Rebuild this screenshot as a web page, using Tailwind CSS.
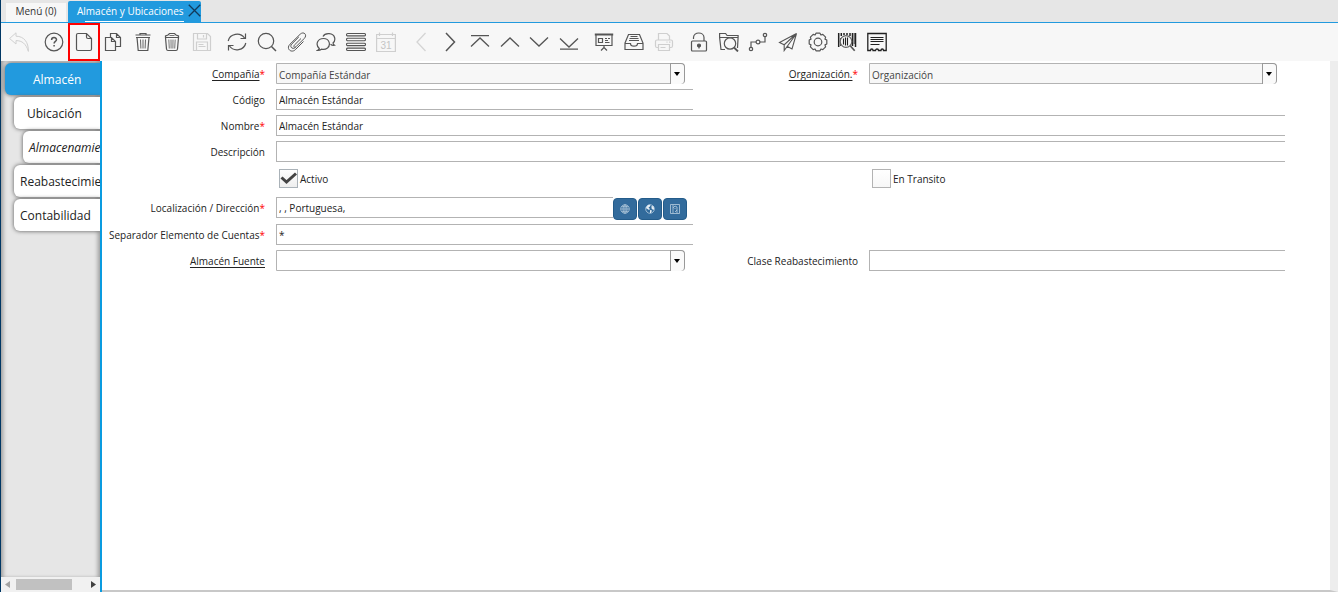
<!DOCTYPE html>
<html lang="es">
  <head>
    <meta charset="UTF-8" />
    <meta name="viewport" content="width=device-width, initial-scale=1.0">
    <title>Almacén y Ubicaciones</title>
    <script src="https://cdn.jsdelivr.net/npm/@tailwindcss/browser@4"></script>
  </head>
  <body class="h-screen flex flex-col overflow-hidden border-l border-[#003764] bg-white font-['Open_Sans','Noto_Sans',sans-serif] text-[10px] text-[#222]">

    <!-- Window tabs -->
    <header class="flex items-end h-[23px] shrink-0 pl-[5px] gap-[2px] bg-[#e6e6e6] border-b border-[#229ade]">
      <button class="h-[19px] w-[60px] pb-[2px] bg-[#f7f7f7] text-[#333]">Menú (0)</button>
      <div class="relative flex items-center h-[21px] w-[133px] pl-[9px] bg-[#229ade] rounded-t-xs">
        <button class="text-white font-medium whitespace-nowrap">Almacén y Ubicaciones</button>
        <span class="absolute left-[17px] bottom-0 w-[99px] h-px bg-white"></span>
        <button aria-label="Cerrar" class="absolute right-0 top-[3px]">
          <svg class="w-[13px] h-[13px]" viewBox="0 0 12 12" fill="none" stroke="#123a5a" stroke-width="1.2"><path d="M.7.7l10.600 10.600M11.300.7L.7 11.300" /></svg>
        </button>
      </div>
    </header>

    <!-- Toolbar -->
    <div class="flex gap-[5px] h-[38px] shrink-0 pl-[3px] bg-[#f7f7f7] text-[#555]">
      <div class="flex w-[30px]">
        <button disabled aria-label="Deshacer" class="flex-1 flex items-center justify-center text-[#d0d0d0]">
          <svg class="w-5 h-5" viewBox="0 0 20 20" fill="none" stroke="currentColor"><path d="M7 .8L.6 6.500 7 12V8.600c6 0 10 3 12.400 10.800C19.500 10 15 4.300 7 4.200z" /></svg>
        </button>
      </div>
      <div class="grid grid-cols-6 w-[178px]">
        <button aria-label="Ayuda" class="flex items-center justify-center">
          <svg class="w-5 h-5" viewBox="0 0 20 20" fill="none" stroke="currentColor" stroke-width="1.200"><circle cx="10" cy="10" r="8.800" /><path stroke-width="1.500" d="M7.600 8c0-3.200 4.900-3.100 4.900-.2 0 1.600-2.400 1.700-2.400 3.700M10.100 13v1.600" /></svg>
        </button>
        <button aria-label="Nuevo" class="w-8 flex items-center justify-center justify-self-center border-2 border-[#f00]">
          <svg class="w-5 h-5 shrink-0" viewBox="0 0 20 20" fill="none" stroke="currentColor" stroke-width="1.200"><path d="M4 1.500h8.500L17.500 6.500v10.500q0 1.500-1.500 1.500H4q-1.500 0-1.500-1.500V3Q2.500 1.500 4 1.500zM12.500 1.500v3.500q0 1.500 1.500 1.500h3.500" /></svg>
        </button>
        <button aria-label="Copiar" class="flex items-center justify-center">
          <svg class="w-5 h-5" viewBox="0 0 20 20" fill="none" stroke="currentColor" stroke-width="1.200"><path d="M7.500 5V1.500h6l4 4v9h-5M13.500 1.500v4h4M2.500 5.500h6l4 4v9h-10zM8.500 5.500v4h4" /></svg>
        </button>
        <button aria-label="Borrar" class="flex items-center justify-center">
          <svg class="w-5 h-5" viewBox="0 0 20 20" fill="none" stroke="currentColor" stroke-width="1.200"><path d="M2.500 3h15M7 3V1.500h6V3M3 5.500h14M4 5.500l1.200 13h9.600l1.200-13" /><path stroke-width=".9" d="M7.500 7.500l.4 9M10 7.500v9M12.500 7.500l-.4 9" /></svg>
        </button>
        <button aria-label="Borrar selección" class="flex items-center justify-center">
          <svg class="w-5 h-5" viewBox="0 0 20 20" fill="none" stroke="currentColor" stroke-width="1.200"><path d="M3.500 5.500h13l-1 11.500q-.2 1.500-1.500 1.500H6q-1.300 0-1.500-1.500zM3.500 5.500V4L6 3l1.500-1.500h5L14 3l2.500 1v1.500" /><path stroke-width=".8" d="M7.500 3.500h5M6.800 7.500l.5 9M9 7.500l.1 9M11 7.500l-.1 9M13.200 7.500l-.5 9" /></svg>
        </button>
        <button disabled aria-label="Guardar" class="flex items-center justify-center text-[#cfcfcf]">
          <svg class="w-5 h-5" viewBox="0 0 20 20" fill="none" stroke="currentColor" stroke-width="1.200"><path d="M1.500 1.500h14l3 3v14h-17zM5.500 1.500v5.500h9V1.500M11.500 3v2.500M4.500 18.500v-8.500h11v8.500M6.500 12.500h5M6.500 14.500h7" /></svg>
        </button>
      </div>
      <div class="grid grid-cols-6 w-[179px]">
        <button aria-label="Refrescar" class="flex items-center justify-center">
          <svg class="w-5 h-5" viewBox="0 0 20 20" fill="none" stroke="currentColor" stroke-width="1.200"><path d="M1.200 9A9 8.500 0 0117.500 6M18.500 1.500V6.500h-5M18.800 11A9 8.500 0 012.500 14M1.500 18.500V13.500h5" /></svg>
        </button>
        <button aria-label="Buscar" class="flex items-center justify-center">
          <svg class="w-5 h-5" viewBox="0 0 20 20" fill="none" stroke="currentColor" stroke-width="1.200"><circle cx="9" cy="9" r="7.700" /><path d="M14.500 14.500l4.500 4.500" stroke-width="1.500" /></svg>
        </button>
        <button aria-label="Adjuntos" class="flex items-center justify-center">
          <svg class="w-5 h-5" viewBox="0 0 20 20" fill="none" stroke="currentColor" stroke-width="1"><path d="M14 6.500L7.300 13.200c-1.300 1.300.3 2.900 1.600 1.600L17.200 6.500C20.800 3 16.800-1.200 13.200 2.200L3 12.200c-4.500 4.600 1.500 9.300 5.300 5.500l8.200-8.200M11.800 5L4.900 11.900c-3 3 .9 6.200 3.800 3.300" /></svg>
        </button>
        <button aria-label="Chat" class="flex items-center justify-center">
          <svg class="w-5 h-5" viewBox="0 0 20 20" fill="none" stroke="currentColor" stroke-width="1.200"><path d="M3.300 16.500C-1 12.500 1.500 6.500 7.500 6.500S15 13 11.500 16c-2 1.500-4 1.700-6 1.200-1 .8-2.500 1.300-4 1.200.9-.5 1.500-1 1.800-1.900zM7 4.500c2-4 10.500-4 11.700 1.500.5 2.500-.5 4-1.700 5 .2 1 .7 1.700 1.500 2.200-1.500.3-3-.2-4-1" /></svg>
        </button>
        <button aria-label="Lista" class="flex items-center justify-center">
          <svg class="w-5 h-5" viewBox="0 0 20 20" fill="none" stroke="currentColor" stroke-width="1.100"><rect x=".5" y="1.500" width="19" height="2.400" rx="1.200" /><rect x=".5" y="6.300" width="19" height="2.400" rx="1.200" /><rect x=".5" y="11.200" width="19" height="2.400" rx="1.200" /><rect x=".5" y="16.100" width="19" height="2.400" rx="1.200" /></svg>
        </button>
        <button disabled aria-label="Calendario" class="flex items-center justify-center text-[#cfcfcf]">
          <svg class="w-5 h-5" viewBox="0 0 20 20" fill="none" stroke="currentColor" stroke-width="1.200"><path d="M.6 2.500h18.800v17H.6zM.6 6.500h18.800M3.500.5V4M16.500.5V4" /><text x="10" y="16.500" text-anchor="middle" font-size="10" font-family="Liberation Sans, sans-serif" fill="#c4c4c4" stroke="none">31</text></svg>
        </button>
      </div>
      <div class="grid grid-cols-6 w-[178px]">
        <button disabled aria-label="Anterior" class="flex items-center justify-center text-[#d4d4d4]">
          <svg class="w-5 h-5" viewBox="0 0 20 20" fill="none" stroke="currentColor" stroke-width="1.300"><path d="M14.500 1L6 10l8.500 9" /></svg>
        </button>
        <button aria-label="Siguiente" class="flex items-center justify-center">
          <svg class="w-5 h-5" viewBox="0 0 20 20" fill="none" stroke="currentColor" stroke-width="1.500"><path d="M6 1l8.500 9L6 19" /></svg>
        </button>
        <button aria-label="Primero" class="flex items-center justify-center">
          <svg class="w-5 h-5" viewBox="0 0 20 20" fill="none" stroke="currentColor" stroke-width="1.300"><path d="M1 3.700h18M1 14.500L10 6l9 8.500" /></svg>
        </button>
        <button aria-label="Arriba" class="flex items-center justify-center">
          <svg class="w-5 h-5" viewBox="0 0 20 20" fill="none" stroke="currentColor" stroke-width="1.300"><path d="M1 14.500L10 6l9 8.500" /></svg>
        </button>
        <button aria-label="Abajo" class="flex items-center justify-center">
          <svg class="w-5 h-5" viewBox="0 0 20 20" fill="none" stroke="currentColor" stroke-width="1.300"><path d="M1 5.500L10 14l9-8.500" /></svg>
        </button>
        <button aria-label="Último" class="flex items-center justify-center">
          <svg class="w-5 h-5" viewBox="0 0 20 20" fill="none" stroke="currentColor" stroke-width="1.300"><path d="M1 6.500L10 15l9-8.500M1 17.200h18" /></svg>
        </button>
      </div>
      <div class="grid grid-cols-3 w-[90px]">
        <button aria-label="Informe" class="flex items-center justify-center">
          <svg class="w-5 h-5" viewBox="0 0 20 20" fill="none" stroke="currentColor" stroke-width="1.200"><path stroke-width="2" d="M.8 2.500h18.400" /><path d="M2 2.500v11h16v-11M10 13.500V16M10 15.500l-3 3M10 15.500l3 3M4.500 6.500h4v4h-4zM11 6.500h2M14 6.500h2M11 8.500h3M11 10.500h4.500" /></svg>
        </button>
        <button aria-label="Archivo" class="flex items-center justify-center">
          <svg class="w-5 h-5" viewBox="0 0 20 20" fill="none" stroke="currentColor" stroke-width="1.200"><path d="M1 11L4.500 2.500h11L19 11v6.500H1zM1 11.500h5.500c0 3.500 7 3.500 7 0H19M6.500 4.500h7M5.500 6.500h9M5 8.500h10" /></svg>
        </button>
        <button disabled aria-label="Imprimir" class="flex items-center justify-center text-[#cfcfcf]">
          <svg class="w-5 h-5" viewBox="0 0 20 20" fill="none" stroke="currentColor" stroke-width="1.200"><path d="M4.500 8V1.500h8.500l2.500 2.500v4M4.500 15.500H3Q1.500 15.500 1.500 14V9.500Q1.500 8 3 8h14q1.500 0 1.500 1.500V14q0 1.500-1.500 1.500h-1.500M4.500 12.500h11v6h-11zM6.500 15.500h5M12.500 10.200h1M15 10.200h1.500" /></svg>
        </button>
      </div>
      <div class="grid grid-cols-7 w-[208px]">
        <button aria-label="Bloquear" class="flex items-center justify-center">
          <svg class="w-5 h-5" viewBox="0 0 20 20" fill="none" stroke="currentColor" stroke-width="1.200"><rect x="2.500" y="9" width="15" height="10" rx="1" /><path d="M4.500 7V5.500c0-6 10.500-6 10.500 0V9" /><circle cx="10" cy="13.500" r="1.500" fill="currentColor" /><path d="M10 14v2.500" /></svg>
        </button>
        <button aria-label="Zoom" class="flex items-center justify-center">
          <svg class="w-5 h-5" viewBox="0 0 20 20" fill="none" stroke="currentColor" stroke-width="1.200"><path d="M6 17.500H2L.6 5.500V1.500h6l1.500 2h11v2L18.500 16M.6 5.500h18.400" /><circle cx="11" cy="11.500" r="5.700" fill="#f7f7f7" /><path d="M15 15.500l4 4" stroke-width="1.800" /></svg>
        </button>
        <button aria-label="Flujo" class="flex items-center justify-center">
          <svg class="w-5 h-5" viewBox="0 0 20 20" fill="none" stroke="currentColor" stroke-width="1.200"><circle cx="3" cy="17" r="1.700" /><circle cx="10" cy="10" r="1.900" /><circle cx="17" cy="3" r="1.700" /><path d="M3 15.300V10h5M12 10h5V4.700" /></svg>
        </button>
        <button aria-label="Enviar" class="flex items-center justify-center">
          <svg class="w-5 h-5" viewBox="0 0 20 20" fill="none" stroke="currentColor" stroke-width="1.100"><path d="M18.500 1.500L1.500 10.500l4.700 2.300zM18.500 1.500L6.200 12.800v5.700L18.500 1.500zM18.500 1.500L14 17l-5-2.700" /></svg>
        </button>
        <button aria-label="Proceso" class="flex items-center justify-center">
          <svg class="w-5 h-5" viewBox="0 0 20 20" fill="none" stroke="currentColor" stroke-width="1.200"><circle cx="10" cy="10" r="3.800" /><path stroke-linejoin="round" d="M18.800 8V12L17 12.900 17.600 14.800 14.800 17.600 12.900 17 12 18.800H8L7.100 17 5.200 17.600 2.400 14.800 3 12.900 1.200 12V8L3 7.100 2.400 5.200 5.200 2.400 7.100 3 8 1.200H12L12.900 3 14.800 2.400 17.600 5.200 17 7.100z" /></svg>
        </button>
        <button aria-label="Producto" class="flex items-center justify-center">
          <svg class="w-5 h-5" viewBox="0 0 20 20" fill="none" stroke="#222"><path stroke-width="1.500" d="M1.700 1v14M4.300 1v3M7 1v2M10 1v2M13 1v3M15.500 1v13M18.500 1v14" /><path stroke-width=".8" d="M3.500 6v8M17.200 1v11" /><circle cx="9" cy="9.500" r="5.800" stroke="#666" stroke-width="1.200" fill="#f7f7f7" /><path stroke-width="1.100" d="M6.500 6.500v6M8.500 5.500v8M10.500 5.500v8" /><path stroke="#555" stroke-width="1.700" d="M13.200 13.700l4.500 5" /></svg>
        </button>
        <button aria-label="Recibo" class="flex items-center justify-center">
          <svg class="w-5 h-5" viewBox="0 0 20 20" fill="none" stroke="#222" stroke-width="1.300"><path d="M3.500 18.500H.8V1.500h18.400v17h-2.700c0-2-2.500-2-2.500 0h-2.500c0-2-3-2-3 0H6c0-2-2.500-2-2.500 0z" /><path d="M3.500 5.500h13M3.500 7.500h13M3.500 9.500h13M3.500 12.500h9" stroke-width="1" /></svg>
        </button>
      </div>
    </div>

    <div class="flex flex-1 min-h-0">
      <!-- Window sections -->
      <aside class="flex flex-col w-[101px] shrink-0 border-r-2 border-[#0a9be0] bg-[#e6e6e6] overflow-hidden">
        <nav class="flex-1 flex flex-col gap-[2px] pt-[2px] text-xs text-[#222] overflow-hidden whitespace-nowrap shadow-[inset_4px_0_4px_-2px_#999,inset_-4px_0_4px_-2px_#999]">
          <button class="h-8 ml-[4px] pl-[28px] pt-px text-left text-white font-medium bg-[#229ade] rounded-l-md shadow-[0_0_4px_#555]">Almacén</button>
          <button class="h-8 ml-[13px] pl-[13px] pt-px text-left bg-white rounded-l-md shadow-[0_0_4px_#555]">Ubicación</button>
          <button class="h-8 ml-[22px] pl-[6px] pt-px text-left italic bg-white rounded-l-md shadow-[0_0_4px_#555]">Almacenamiento</button>
          <button class="h-8 ml-[13px] pl-[6px] pt-px text-left bg-white rounded-l-md shadow-[0_0_4px_#555]">Reabastecimiento</button>
          <button class="h-8 ml-[13px] pl-[6px] pt-px text-left bg-white rounded-l-md shadow-[0_0_4px_#555]">Contabilidad</button>
        </nav>
        <div class="flex items-center h-[15px] px-[4px] bg-[#f1f1f1]">
          <svg class="w-[5px] h-[7px]" viewBox="0 0 5 7" fill="#a3a3a3"><path d="M5 0v7L0 3.500z" /></svg>
          <span class="ml-[6px] w-[56px] h-[11px] bg-[#c1c1c1]"></span>
          <svg class="ml-auto w-[5px] h-[7px]" viewBox="0 0 5 7" fill="#404040"><path d="M0 0v7l5-3.500z" /></svg>
        </div>
      </aside>

      <!-- Form -->
      <main class="flex-1 min-w-0 border-r-8 border-b-2 border-r-[#ededed] border-b-[#c8c8c8]">
        <form class="grid grid-cols-[174fr_417fr_176fr_416fr_45fr] items-start pt-[2px] leading-[23px]">
          <label for="company" class="h-[26px] pr-[11px] text-right whitespace-nowrap"><span class="underline underline-offset-2">Compañía</span><span class="text-[#f00]">*</span></label>
          <div class="relative mr-[8px]">
            <select id="company" class="appearance-none block w-full h-[21px] pl-[2px] bg-[#f7f7f7] border border-[#b3b3b3] rounded-r-sm text-[#444]"><option>Compañía Estándar</option></select>
            <span class="absolute right-0 top-0 flex items-center w-[15px] h-[21px] pl-[3px] border border-b-0 border-[#999] rounded-r-sm bg-[#fafafa] pointer-events-none"><svg class="w-[6px] h-[4px]" viewBox="0 0 6 4"><path d="M0 0h6L3 4z" /></svg></span>
          </div>
          <label for="org" class="pr-[11px] text-right whitespace-nowrap"><span class="underline underline-offset-2">Organización.</span><span class="text-[#f00]">*</span></label>
          <div class="relative mr-[8px]">
            <select id="org" class="appearance-none block w-full h-[21px] pl-[2px] bg-[#f7f7f7] border border-[#b3b3b3] rounded-r-sm text-[#444]"><option>Organización</option></select>
            <span class="absolute right-0 top-0 flex items-center w-[15px] h-[21px] pl-[3px] border border-b-0 border-[#999] rounded-r-sm bg-[#fafafa] pointer-events-none"><svg class="w-[6px] h-[4px]" viewBox="0 0 6 4"><path d="M0 0h6L3 4z" /></svg></span>
          </div>

          <label for="code" class="col-start-1 h-[26px] pr-[11px] text-right">Código</label>
          <input id="code" type="text" value="Almacén Estándar" class="w-full h-[21px] pl-[2px] pt-[2px] border border-r-0 border-[#b3b3b3]">

          <label for="name" class="col-start-1 h-[26px] pr-[11px] text-right">Nombre<span class="text-[#f00]">*</span></label>
          <input id="name" type="text" value="Almacén Estándar" class="col-span-3 w-full h-[21px] pl-[2px] pt-[2px] border border-r-0 border-[#b3b3b3]">

          <label for="desc" class="col-start-1 h-[26px] pr-[11px] text-right">Descripción</label>
          <input id="desc" type="text" class="col-span-3 w-full h-[21px] pl-[2px] pt-[2px] border border-r-0 border-[#b3b3b3]">

          <div class="col-start-2 flex items-center gap-[2px] h-[30px] pl-[3px] pb-[7px]">
            <div class="relative w-[19px] h-[19px]">
              <input id="active" type="checkbox" checked class="appearance-none block w-full h-full border border-[#aab2b8] bg-linear-to-b from-white to-[#eee]">
              <svg class="absolute inset-0 w-[19px] h-[19px] pointer-events-none" viewBox="0 0 19 19" fill="none" stroke="#444" stroke-width="3"><path d="M2.500 8.500L7.500 13l9.500-8.500" /></svg>
            </div>
            <label for="active" class="pt-[2px]">Activo</label>
          </div>
          <div class="col-start-4 flex items-center gap-[2px] h-[30px] pl-[3px] pb-[7px]">
            <input id="transit" type="checkbox" class="appearance-none w-[19px] h-[19px] border border-[#b3b3b3] bg-linear-to-b from-white to-[#f7f7f7]">
            <label for="transit" class="pt-[2px]">En Transito</label>
          </div>

          <label for="location" class="col-start-1 h-[27px] pr-[11px] text-right whitespace-nowrap">Localización / Dirección<span class="text-[#f00]">*</span></label>
          <div class="flex pr-[6px]">
            <input id="location" type="text" value=", , Portuguesa," class="flex-1 min-w-0 h-[21px] pl-[2px] pt-[2px] border border-r-0 border-[#b3b3b3]">
            <div class="flex gap-px pt-px">
              <button type="button" aria-label="Dirección" class="flex items-center justify-center w-6 h-[22px] rounded-sm bg-[#326b9c] border border-[#245c8a]">
                <svg class="w-[10px] h-[10px]" viewBox="0 0 10 10" fill="none" stroke="#b9cee0" stroke-width=".7"><circle cx="5" cy="5" r="4.300" /><ellipse cx="5" cy="5" rx="2" ry="4.300" /><path d="M.7 5h8.600M1.500 2.700h7M1.500 7.300h7M5 .7v8.600" /></svg>
              </button>
              <button type="button" aria-label="Mapa" class="flex items-center justify-center w-6 h-[22px] rounded-sm bg-[#326b9c] border border-[#245c8a]">
                <svg class="w-[10px] h-[10px]" viewBox="0 0 10 10" fill="none" stroke="#c9dae8" stroke-width=".7"><circle cx="5" cy="5" r="4.300" /><path fill="#e4edf4" stroke="none" d="M.8 4L3 1l2.500-.3L5 2.500 3.500 3.500 5 5 4 6 2.500 5zM6.500 2l2 .3L9.200 5l-1 1L6.500 4.500zM5 6l2 .5L6 9H5z" /></svg>
              </button>
              <button type="button" aria-label="Ruta" class="flex items-center justify-center w-6 h-[22px] rounded-sm bg-[#326b9c] border border-[#245c8a]">
                <svg class="w-[10px] h-[10px]" viewBox="0 0 10 10" fill="none" stroke="#b9cee0" stroke-width=".8"><path d="M.5.5h9v9h-9zM3 1v8M3 4l2-2 2 1v3L5 8M7 6v3M5 4v1" /></svg>
              </button>
            </div>
          </div>

          <label for="separator" class="col-start-1 h-[26px] pr-[11px] text-right whitespace-nowrap">Separador Elemento de Cuentas<span class="text-[#f00]">*</span></label>
          <input id="separator" type="text" value="*" class="w-full h-[21px] pl-[2px] pt-[2px] border border-r-0 border-[#b3b3b3]">

          <label for="source" class="col-start-1 h-[26px] pr-[11px] text-right whitespace-nowrap underline underline-offset-2">Almacén Fuente</label>
          <div class="relative mr-[8px]">
            <select id="source" class="appearance-none block w-full h-[21px] pl-[2px] bg-white border border-[#b3b3b3] rounded-r-sm"><option></option></select>
            <span class="absolute right-0 top-0 flex items-center w-[15px] h-[21px] pl-[3px] border border-b-0 border-[#999] rounded-r-sm bg-[#fafafa] pointer-events-none"><svg class="w-[6px] h-[4px]" viewBox="0 0 6 4"><path d="M0 0h6L3 4z" /></svg></span>
          </div>
          <label for="replenish" class="pr-[11px] text-right whitespace-nowrap">Clase Reabastecimiento</label>
          <input id="replenish" type="text" class="w-full h-[21px] pl-[2px] pt-[2px] border border-r-0 border-[#b3b3b3]">
        </form>
      </main>
    </div>
  </body>
</html>
